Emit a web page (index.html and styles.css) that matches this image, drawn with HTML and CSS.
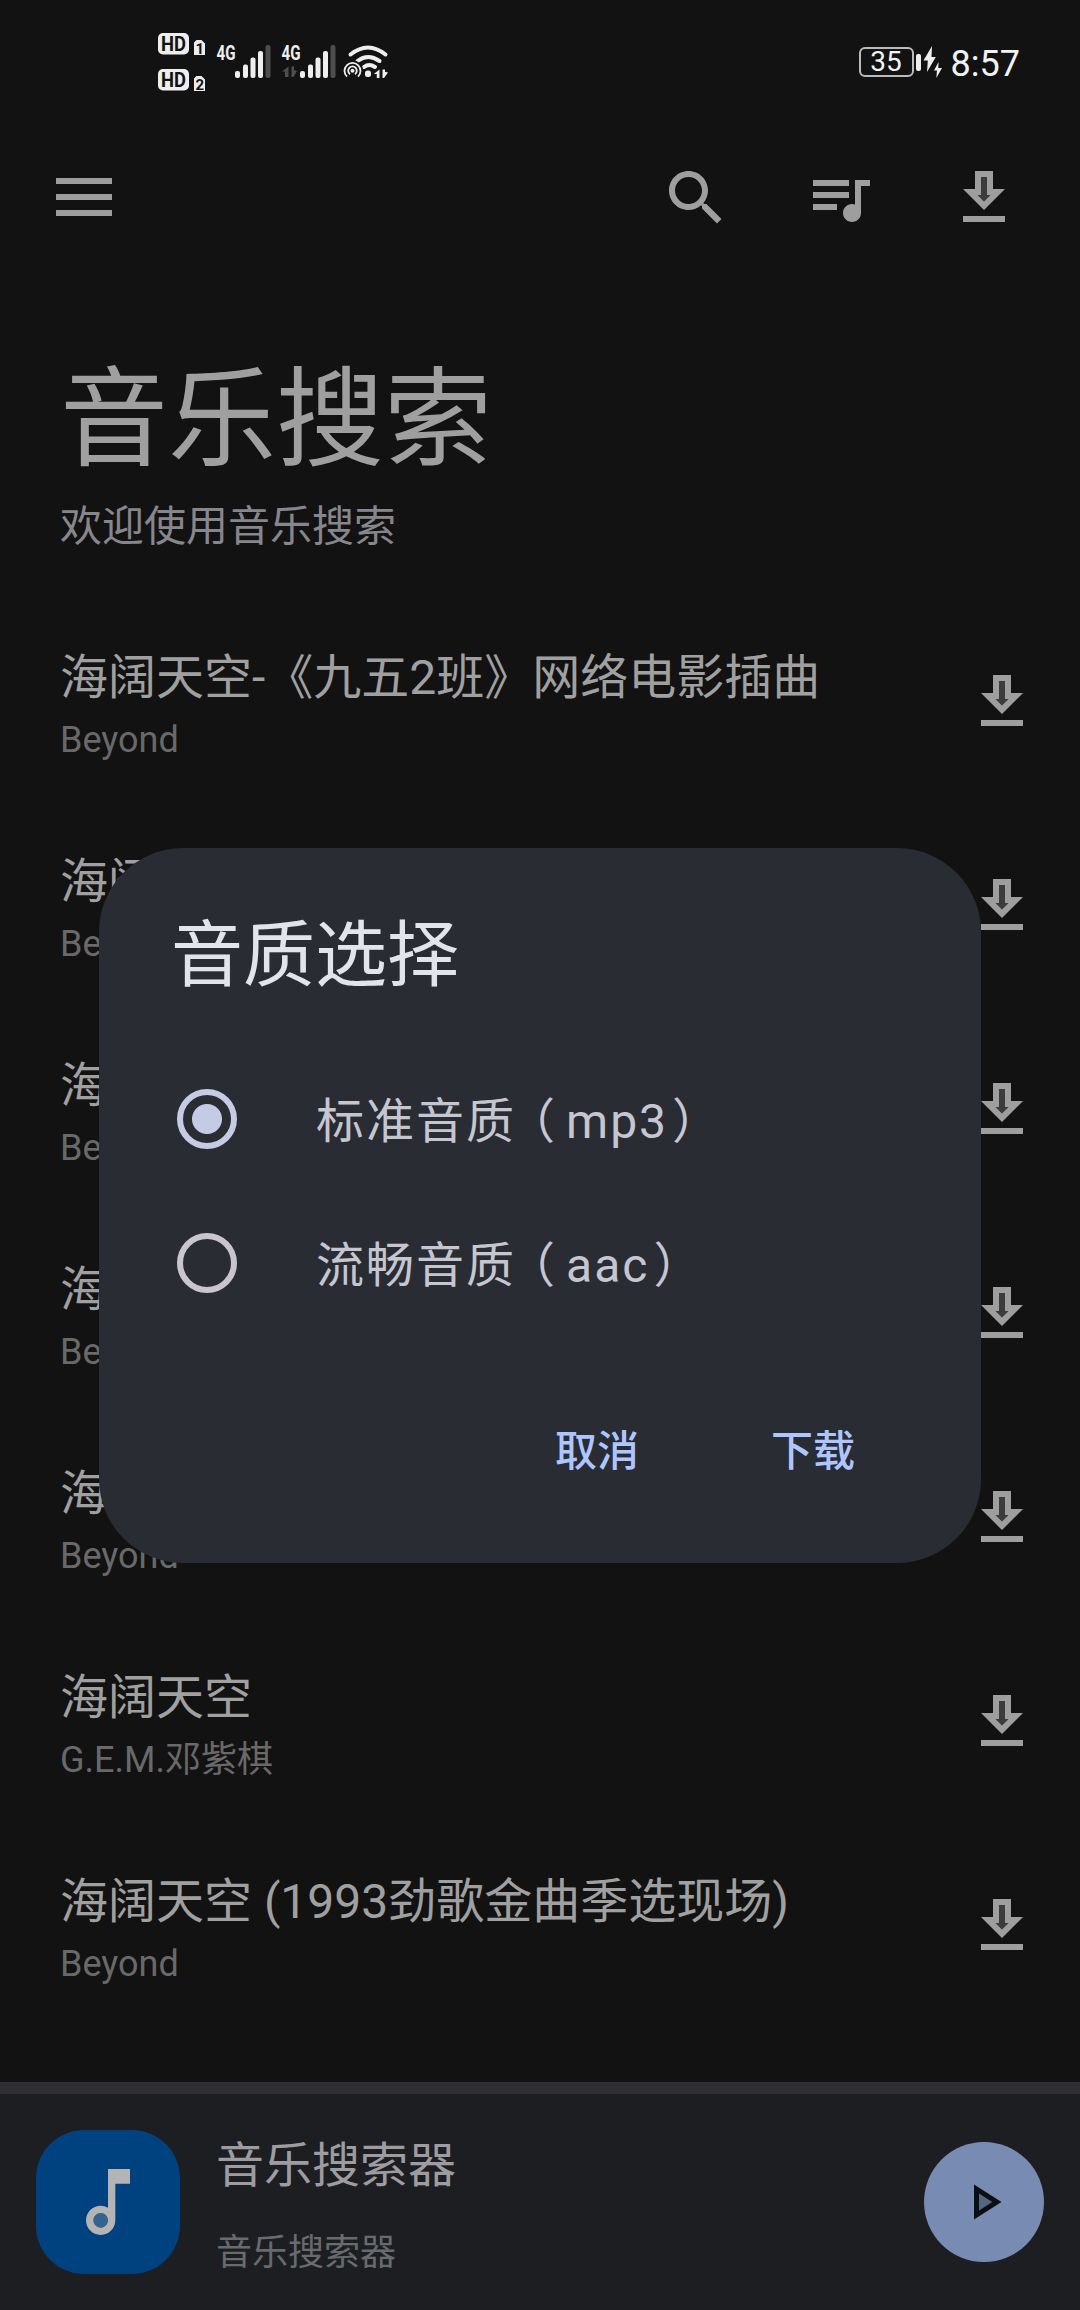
FILE: index.html
```html
<!DOCTYPE html>
<html lang="zh-CN">
<head>
<meta charset="utf-8">
<title>音乐搜索</title>
<link rel="stylesheet" href="styles.css">
</head>
<body>
<svg class="defs" width="0" height="0">
  <symbol id="download" viewBox="0 0 24 24">
    <path opacity=".3" d="M13 9V5h-2v6H9.83L12 13.17 14.17 11H13z"/>
    <path d="M15 9V3H9v6H5l7 7 7-7h-4zm-3 4.17L9.83 11H11V5h2v6h1.17L12 13.17zM5 18h14v2H5z"/>
  </symbol>
  <symbol id="signal" viewBox="0 0 36 34">
    <rect x="0" y="26" width="5" height="7" rx="2"/>
    <rect x="8" y="19.500" width="5" height="13.500" rx="2"/>
    <rect x="15.500" y="12.500" width="5" height="20.500" rx="2"/>
    <rect x="23" y="6" width="5" height="27" rx="2"/>
    <rect x="30.500" y="0" width="5" height="33" rx="2" fill="#4e4e4e"/>
  </symbol>
</svg>
<div class="screen">
  <div class="status">
    <svg class="status-left" width="240" height="70" viewBox="150 28 240 70">
      <g class="badge">
        <rect x="158" y="33" width="31" height="21.500" rx="5"/>
        <rect x="158" y="69" width="31" height="21.500" rx="5"/>
        <path d="M196.500 40h5l3.500 3.500V55h-11V42.500zM196.500 76h5l3.500 3.500V91h-11V78.500z"/>
        <text x="161" y="51" class="hd" textLength="25" lengthAdjust="spacingAndGlyphs">HD</text>
        <text x="161" y="87" class="hd" textLength="25" lengthAdjust="spacingAndGlyphs">HD</text>
        <text x="195.500" y="53.500" class="num">1</text>
        <text x="195.500" y="89.500" class="num">2</text>
      </g>
      <text x="216.500" y="60" class="net" textLength="19" lengthAdjust="spacingAndGlyphs">4G</text>
      <use href="#signal" x="235" y="45" width="36" height="34"/>
      <text x="281.500" y="60" class="net" textLength="19" lengthAdjust="spacingAndGlyphs">4G</text>
      <use href="#signal" x="300" y="45" width="36" height="34"/>
      <path class="muted" d="M288.500 66.500V77H285v-5.500h-3zM291.500 66.500V77h2l3.500-6-3-1v-3.500z"/>
      <g class="wifi">
        <path d="M350.500 54.500q17.500-14 35 0"/>
        <path d="M357.500 61q10.500-8 22 0"/>
        <path d="M364 67q5-4 11 0"/>
      </g>
      <circle cx="352.500" cy="70.700" r="10.500" fill="#121212"/>
      <path class="ring" d="M347 76.700a8 8 0 1 1 11 0M350 74.200a4.300 4.300 0 1 1 5 0"/>
      <circle cx="352.500" cy="70.700" r="2"/>
      <rect x="365" y="70.500" width="6" height="6.500" rx="2.500"/>
      <path d="M379.500 69.500V78h-2.700v-4h-3zM382.500 69.500V78h1.500l4-5.500-3-.8v-2.200z"/>
    </svg>
    <div class="status-right">
      <span class="battery">35</span><i class="cap"></i>
      <svg class="bolt" width="20" height="34" viewBox="0 0 20 34"><path d="M9 1L.5 15.500h4.300L4 27l8.800-15H8.500zM15.500 17L11 25.500h3L13.300 33 19 23h-3.700z"/></svg>
      <span class="time">8:57</span>
    </div>
  </div>

  <div class="appbar">
    <svg width="72" height="72" viewBox="0 0 72 72"><path d="M8 16h56v6H8zM8 32h56v6H8zM8 48h56v6H8z"/></svg>
    <div class="actions">
      <svg class="icon" viewBox="0 0 24 24"><path d="M15.500 14h-.79l-.28-.27C15.410 12.590 16 11.110 16 9.500 16 5.910 13.090 3 9.500 3S3 5.910 3 9.500 5.910 16 9.500 16c1.610 0 3.090-.59 4.230-1.570l.27.28v.79l5 4.990L20.490 19l-4.990-5zm-6 0C7.010 14 5 11.990 5 9.500S7.010 5 9.500 5 14 7.010 14 9.500 11.990 14 9.500 14z"/></svg>
      <svg class="icon" viewBox="0 0 24 24"><path d="M15 6H3v2h12V6zm0 4H3v2h12v-2zM3 16h8v-2H3v2zM17 6v8.180c-.31-.11-.65-.18-1-.18-1.660 0-3 1.340-3 3s1.340 3 3 3 3-1.340 3-3V8h3V6h-5z"/></svg>
      <svg class="icon"><use href="#download"/></svg>
    </div>
  </div>

  <h1 class="headline">音乐搜索</h1>
  <p class="welcome">欢迎使用音乐搜索</p>

  <div class="list">
    <div class="song"><div><div class="name">海阔天空-《九五2班》网络电影插曲</div><div class="artist">Beyond</div></div><svg class="icon"><use href="#download"/></svg></div>
    <div class="song"><div><div class="name">海阔天空</div><div class="artist">Beyond</div></div><svg class="icon"><use href="#download"/></svg></div>
    <div class="song"><div><div class="name">海阔天空</div><div class="artist">Beyond</div></div><svg class="icon"><use href="#download"/></svg></div>
    <div class="song"><div><div class="name">海阔天空</div><div class="artist">Beyond</div></div><svg class="icon"><use href="#download"/></svg></div>
    <div class="song"><div><div class="name">海阔天空</div><div class="artist">Beyond</div></div><svg class="icon"><use href="#download"/></svg></div>
    <div class="song"><div><div class="name">海阔天空</div><div class="artist">G.E.M.邓紫棋</div></div><svg class="icon"><use href="#download"/></svg></div>
    <div class="song"><div><div class="name">海阔天空 (1993劲歌金曲季选现场)</div><div class="artist">Beyond</div></div><svg class="icon"><use href="#download"/></svg></div>
  </div>

  <div class="player">
    <div class="cover">
      <svg width="88" height="88" viewBox="0 0 24 24"><circle cx="10" cy="17" r="2" opacity=".3"/><path d="M12 3l.01 10.550c-.6-.34-1.280-.55-2-.55C7.790 13 6 14.790 6 17s1.790 4 4.010 4S14 19.210 14 17V7h4V3h-6zm-1.990 16c-1.100 0-2-.9-2-2s.9-2 2-2 2 .9 2 2-.9 2-2 2z"/></svg>
    </div>
    <div class="track">
      <div class="track-name">音乐搜索器</div>
      <div class="track-artist">音乐搜索器</div>
    </div>
    <div class="play">
      <svg width="60" height="60" viewBox="0 0 24 24"><path opacity=".3" d="M10 8.640v6.720L15.270 12z"/><path d="M8 5v14l11-7L8 5zm2 3.640L15.270 12 10 15.360V8.640z"/></svg>
    </div>
  </div>

  <div class="dialog">
    <h2 class="dialog-title">音质选择</h2>
    <div class="option"><i class="radio checked"></i><span>标准音质<b class="open">（</b>mp3<b class="close">）</b></span></div>
    <div class="option"><i class="radio"></i><span>流畅音质<b class="open">（</b>aac<b class="close">）</b></span></div>
    <div class="buttons"><span>取消</span><span>下载</span></div>
  </div>
</div>
</body>
</html>
```
FILE: styles.css
```css
* { box-sizing: border-box; margin: 0; padding: 0; }
body {
  background: #121212;
  font-family: Roboto, "Noto Sans CJK SC", sans-serif;
  font-weight: 400;
}
svg { display: block; flex: none; }
.defs { position: absolute; }
.screen {
  position: relative;
  width: 1080px;
  height: 2310px;
  overflow: hidden;
  display: flex;
  flex-direction: column;
  background: #121212;
}
.icon { width: 72px; height: 72px; }

.status {
  height: 126px;
  padding: 28px 60px 28px 150px;
  display: flex;
  justify-content: space-between;
  fill: #eee;
  color: #f2f2f2;
}
.badge text { fill: #121212; font-weight: 700; }
.hd { font-size: 20.5px; }
.badge .num { font-size: 15px; }
.net { font-size: 20px; font-weight: 700; }
.muted { fill: #4e4e4e; }
.wifi { fill: none; stroke: #eee; stroke-width: 4; stroke-linecap: round; }
.ring { fill: none; stroke: #eee; stroke-width: 1.8; }
.status-right { display: flex; align-items: center; height: 68px; }
.battery {
  width: 55px;
  height: 30px;
  border: 2px solid #bbb;
  border-radius: 6px;
  font-size: 28px;
  line-height: 26px;
  text-align: center;
}
.cap { width: 5px; height: 17px; margin-left: 2px; border-radius: 2px; background: #eee; }
.bolt { margin-left: 2px; }
.time { margin: 3px 0 0 8px; font-size: 36px; line-height: 42px; }

.appbar {
  height: 234px;
  padding: 36px 60px 0 48px;
  display: flex;
  justify-content: space-between;
  fill: #9e9e9e;
}
.actions { display: flex; gap: 72px; }

.headline {
  padding-left: 60px;
  font-size: 108px;
  line-height: 120px;
  font-weight: 400;
  color: #9f9f9f;
}
.welcome {
  margin-top: 17px;
  padding-left: 60px;
  font-size: 42px;
  line-height: 60px;
  color: #87868c;
}
.list { margin-top: 43px; flex: 1; }
.song {
  height: 204px;
  padding: 48px 42px 0 60px;
  display: flex;
  justify-content: space-between;
  fill: #9e9e9e;
}
.song .icon { margin-top: 18px; }
.name { font-size: 48px; line-height: 60px; color: #a0a0a0; }
.artist { margin-top: 8px; font-size: 36px; line-height: 48px; color: #696969; }

.player {
  height: 228px;
  padding: 36px 36px 0;
  border-top: 12px solid #302f34;
  display: flex;
  background: #1d1e22;
}
.cover {
  width: 144px;
  height: 144px;
  border-radius: 48px;
  background: #00417f;
  fill: #b4b4b4;
  display: grid;
  place-items: center;
}
.track { margin-left: 36px; padding-top: 6px; flex: 1; }
.track-name { font-size: 48px; line-height: 60px; color: #9d9ca1; }
.track-artist { margin-top: 33px; font-size: 36px; line-height: 48px; color: #686b6e; }
.play {
  width: 120px;
  height: 120px;
  margin-top: 12px;
  border-radius: 50%;
  background: #778bb3;
  fill: #0b0e12;
  display: grid;
  place-items: center;
}

.dialog {
  position: absolute;
  left: 99px;
  top: 848px;
  width: 882px;
  height: 715px;
  padding: 63px 72px 0;
  border-radius: 84px;
  background: #2a2c34;
}
.dialog-title {
  margin-bottom: 46px;
  font-size: 72px;
  line-height: 90px;
  font-weight: 400;
  color: #e3e3ec;
}
.option {
  height: 144px;
  padding-left: 6px;
  display: flex;
  align-items: center;
  gap: 79px;
  font-size: 48px;
  line-height: 62px;
  letter-spacing: 2px;
  color: #c6c6d0;
}
.option span { padding-top: 5px; }
.option b { font-weight: 400; font-feature-settings: "halt"; }
.option .open { margin: 0 9px 0 15px; }
.option .close { margin-left: 4px; }
.radio {
  width: 60px;
  height: 60px;
  border: 6px solid #c8c5ce;
  border-radius: 50%;
}
.radio.checked {
  border-color: #c5cbe4;
  background: radial-gradient(circle, #c5cbe4 14.5px, transparent 15.5px);
}
.buttons {
  margin-top: 87px;
  padding-right: 54px;
  display: flex;
  justify-content: flex-end;
  gap: 132px;
  font-size: 42px;
  line-height: 60px;
  font-weight: 500;
  color: #adc6ff;
}
```
